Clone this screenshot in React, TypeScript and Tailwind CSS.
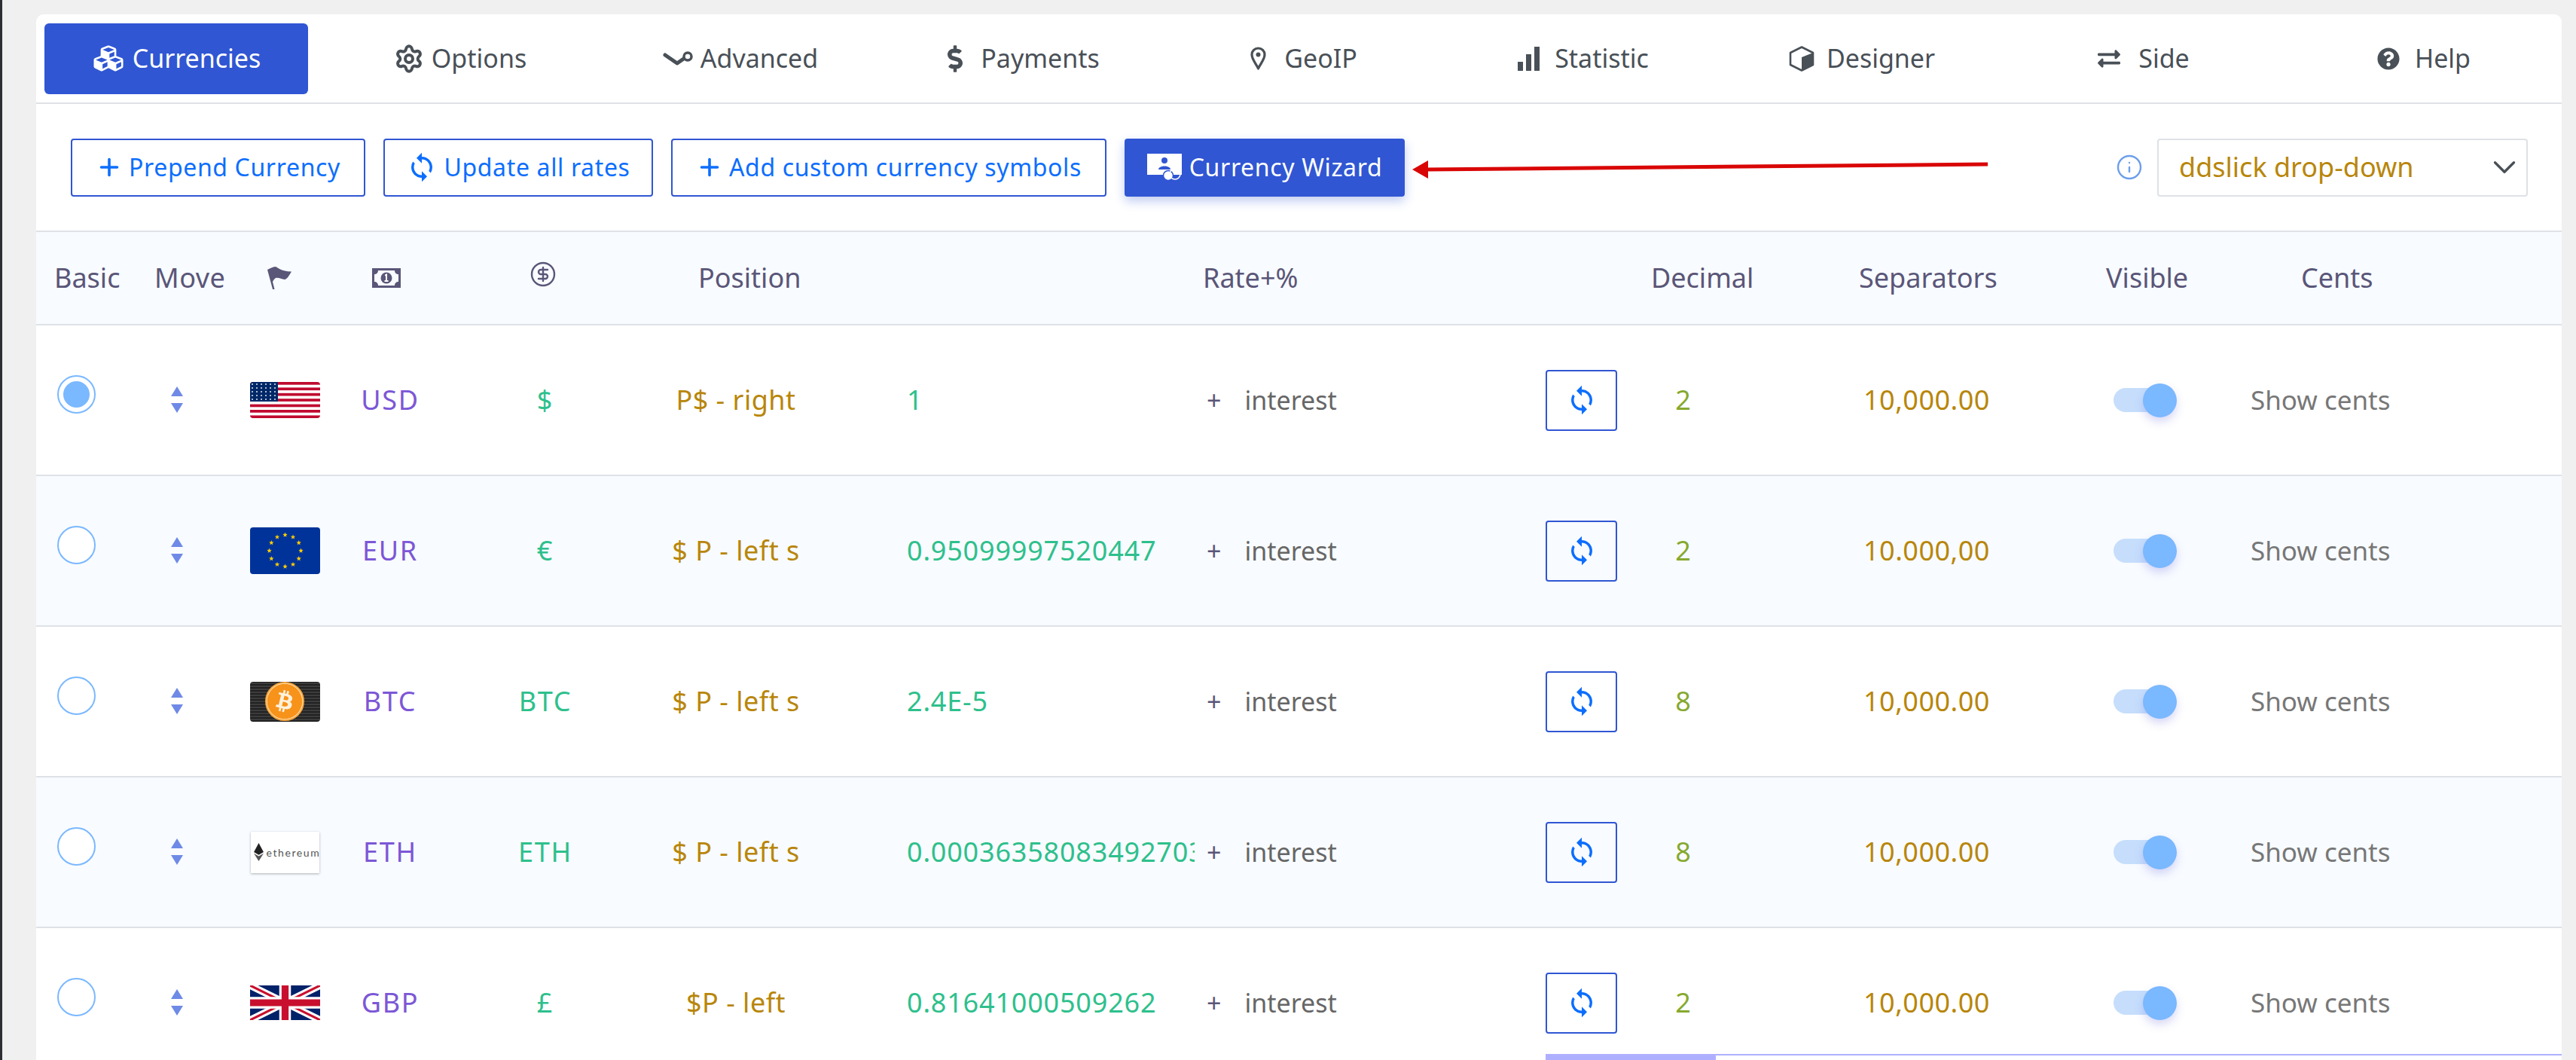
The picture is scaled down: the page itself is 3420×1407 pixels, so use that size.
import { ChevronDown, Plus, Settings, Info, CircleDollarSign } from "lucide-react";
import { FaBitcoin, FaCubes, FaDollarSign, FaExchangeAlt, FaQuestionCircle } from "react-icons/fa";
import { MdSync } from "react-icons/md";
import type { ReactNode } from "react";

const rows = [
  { code: "USD", sym: "$", pos: "P$ - right", rate: "1", dec: "2", sep: "10,000.00", flag: "us", checked: true },
  { code: "EUR", sym: "€", pos: "$ P - left s", rate: "0.95099997520447", dec: "2", sep: "10.000,00", flag: "eu", checked: false },
  { code: "BTC", sym: "BTC", pos: "$ P - left s", rate: "2.4E-5", dec: "8", sep: "10,000.00", flag: "btc", checked: false },
  { code: "ETH", sym: "ETH", pos: "$ P - left s", rate: "0.00036358083492703", dec: "8", sep: "10,000.00", flag: "eth", checked: false },
  { code: "GBP", sym: "£", pos: "$P - left", rate: "0.81641000509262", dec: "2", sep: "10,000.00", flag: "gb", checked: false },
];

function starPoints(cx: number, cy: number, r: number) {
  return Array.from({ length: 10 }, (_, i) => {
    const rad = i % 2 === 0 ? r : r * 0.42;
    const a = (i * 36 * Math.PI) / 180;
    return `${cx + rad * Math.sin(a)},${cy - rad * Math.cos(a)}`;
  }).join(" ");
}

function FlagImage({ kind }: { kind: string }) {
  if (kind === "us") {
    return (
      <svg viewBox="0 0 93 48" className="w-[93px] h-[48px] rounded-[4px]">
        <rect width="93" height="48" fill="#fff" />
        {[0, 7.4, 14.8, 22.2, 29.6, 37, 44.4].map((y) => (
          <rect key={y} y={y} width="93" height="3.7" fill="#bf0a30" />
        ))}
        <rect width="37" height="26" fill="#002868" />
        {[3, 8, 13, 18, 23].map((y) =>
          [3, 9, 15, 21, 27, 33].map((x) => <circle key={`${x}-${y}`} cx={x} cy={y} r="0.9" fill="#fff" />),
        )}
      </svg>
    );
  }
  if (kind === "eu") {
    const stars = Array.from({ length: 12 }, (_, i) => i * 30);
    return (
      <svg viewBox="0 0 93 62" className="w-[93px] h-[62px] rounded-[4px]">
        <rect width="93" height="62" fill="#039" />
        {stars.map((a) => (
          <polygon
            key={a}
            points={starPoints(46.5 + 21 * Math.sin((a * Math.PI) / 180), 31 - 21 * Math.cos((a * Math.PI) / 180), 3.4)}
            fill="#fc0"
          />
        ))}
      </svg>
    );
  }
  if (kind === "btc") {
    return (
      <div className="w-[93px] h-[53px] rounded-[4px] flex items-center justify-center bg-[repeating-linear-gradient(0deg,#222_0_2px,#3c3c3c_2px_4px)]">
        <div className="w-[52px] h-[52px] rounded-full bg-[#fff1dc] flex items-center justify-center border-2 border-[#f7a63c]">
          <FaBitcoin className="w-[48px] h-[48px] text-[#f7931a]" />
        </div>
      </div>
    );
  }
  if (kind === "eth") {
    return (
      <div className="w-[91px] h-[55px] bg-white shadow-[0_1px_3px_rgba(0,0,0,0.3)] flex items-center pl-[4px] gap-[4px]">
        <svg viewBox="0 0 14 26" className="w-[13px] h-[24px] shrink-0">
          <path d="M7 0L0 13l7 4 7-4z" fill="#222" />
          <path d="M0 15l7 11 7-11-7 4z" fill="#555" />
        </svg>
        <span className="text-[14px] tracking-[1.6px] text-[#555] font-['Lato',sans-serif]">ethereum</span>
      </div>
    );
  }
  return (
    <svg viewBox="0 0 60 30" preserveAspectRatio="none" className="w-[93px] h-[46px]">
      <rect width="60" height="30" fill="#012169" />
      <path d="M0 0L60 30M60 0L0 30" stroke="#fff" strokeWidth="6" />
      <path d="M0 0L60 30M60 0L0 30" stroke="#c8102e" strokeWidth="2" />
      <path d="M30 0V30M0 15H60" stroke="#fff" strokeWidth="10" />
      <path d="M30 0V30M0 15H60" stroke="#c8102e" strokeWidth="6" />
    </svg>
  );
}

function Tab({ icon, label, active, className = "" }: { icon: ReactNode; label: string; active?: boolean; className?: string }) {
  return (
    <div
      className={`flex items-center justify-center gap-[10px] w-[350px] h-[94px] rounded-[6px] text-[34px] ${className} ${
        active ? "bg-[#3056d3] text-white" : "text-[#495057]"
      }`}
    >
      {icon}
      <span>{label}</span>
    </div>
  );
}

function OutlineButton({ icon, label, className }: { icon: ReactNode; label: string; className: string }) {
  return (
    <div
      className={`flex items-center justify-center gap-[8px] h-[77px] rounded-[4px] border-2 border-[#3056d3] text-[#0d6efd] text-[32px] tracking-[0.64px] ${className}`}
    >
      {icon}
      <span>{label}</span>
    </div>
  );
}

export default function App() {
  return (
    <div className="h-[1407px] overflow-hidden bg-[#f0f0f0] border-l-[3px] border-[#2b2e33] pl-[45px] pt-[19px] pr-[19px] font-['Noto_Sans',sans-serif]">
      <div className="relative h-[1388px] bg-white rounded-t-[10px] overflow-hidden">
        {/* tabs */}
        <div className="flex items-center gap-[23px] h-[119px] pl-[11px] border-b-2 border-[#dee2e6]">
          <Tab active label="Currencies" icon={<FaCubes className="w-[44px] h-[39px]" />} />
          <Tab className="pl-[8px]" label="Options" icon={<Settings className="w-[40px] h-[40px]" strokeWidth={2.4} />} />
          <Tab
            className="pl-[6px]"
            label="Advanced"
            icon={
              <svg viewBox="0 0 40 20" className="w-[40px] h-[20px]">
                <path d="M3 5l16 11 10-7" fill="none" stroke="#495057" strokeWidth="5" strokeLinecap="round" strokeLinejoin="round" />
                <circle cx="33" cy="7" r="5" fill="#fff" stroke="#495057" strokeWidth="3.500" />
              </svg>
            }
          />
          <Tab className="pl-[12px]" label="Payments" icon={<FaDollarSign className="w-[20px] h-[36px] mr-[14px]" />} />
          <Tab
            className="pl-[10px]"
            label="GeoIP"
            icon={
              <svg viewBox="0 0 21 31" className="w-[21px] h-[31px] mr-[14px]">
                <path d="M10.500 29C8 23 2 17 2 10.500a8.500 8.500 0 0 1 17 0C19 17 13 23 10.500 29z" fill="none" stroke="#495057" strokeWidth="3.200" strokeLinejoin="round" />
                <circle cx="10.500" cy="10.500" r="3" fill="#495057" />
              </svg>
            }
          />
          <Tab
            className="pl-[6px]"
            label="Statistic"
            icon={
              <svg viewBox="0 0 29 32" className="w-[29px] h-[32px] mr-[10px]">
                <rect x="0" y="20" width="7" height="12" fill="#495057" />
                <rect x="11" y="10" width="7" height="22" fill="#495057" />
                <rect x="22" y="0" width="7" height="32" fill="#495057" />
              </svg>
            }
          />
          <Tab
            label="Designer"
            icon={
              <svg viewBox="0 0 34 34" className="w-[34px] h-[34px] mr-[6px]">
                <path d="M17 1.500L32 9v16L17 32.500 2 25V9z" fill="#fff" stroke="#495057" strokeWidth="2.600" strokeLinejoin="round" />
                <path d="M17 15L32 9v16L17 32.500z" fill="#495057" />
              </svg>
            }
          />
          <Tab label="Side" icon={<FaExchangeAlt className="w-[34px] h-[30px] mr-[12px]" />} />
          <Tab label="Help" icon={<FaQuestionCircle className="w-[30px] h-[30px] mr-[10px]" />} />
        </div>

        {/* toolbar */}
        <div className="flex items-center h-[168px] pl-[46px] pr-[45px] gap-[24px]">
          <OutlineButton className="w-[391px]" label="Prepend Currency" icon={<Plus className="w-[36px] h-[36px]" strokeWidth={2.4} />} />
          <OutlineButton className="w-[358px]" label="Update all rates" icon={<MdSync className="w-[42px] h-[42px]" />} />
          <OutlineButton className="w-[578px]" label="Add custom currency symbols" icon={<Plus className="w-[36px] h-[36px]" strokeWidth={2.4} />} />
          <div className="flex items-center justify-center gap-[10px] w-[372px] h-[77px] rounded-[4px] bg-[#3056d3] text-white text-[32px] tracking-[0.64px] shadow-[0_6px_14px_rgba(48,86,211,0.3)]">
            <svg viewBox="0 0 46 36" className="w-[46px] h-[36px]">
              <rect width="46" height="28" fill="#fff" />
              <circle cx="23" cy="9" r="4" fill="#3056d3" />
              <path d="M15 21c0-6 16-6 16 0z" fill="#3056d3" />
              <circle cx="28" cy="29" r="6.500" fill="#fff" stroke="#3056d3" strokeWidth="1.500" />
              <circle cx="37" cy="27" r="7" fill="none" stroke="#fff" strokeWidth="1.500" />
            </svg>
            <span>Currency Wizard</span>
          </div>
          <div className="ml-auto flex items-center gap-[19px]">
            <Info className="w-[36px] h-[36px] text-[#6d9eeb]" strokeWidth={1.6} />
            <div className="flex items-center justify-between w-[492px] h-[77px] border-2 border-[#dee2e6] rounded-[4px] pl-[27px] pr-[4px] text-[36px] text-[#b8860b]">
              <span>ddslick drop-down</span>
              <ChevronDown className="w-[50px] h-[50px] text-[#495057]" strokeWidth={1.6} />
            </div>
          </div>
        </div>

        {/* annotation arrow */}
        <svg className="absolute left-[1825px] top-[185px] w-[770px] h-[40px]" viewBox="0 0 770 40">
          <path d="M2 21L23 9v24z" fill="#d90606" />
          <path d="M20 21L766 14" stroke="#d90606" strokeWidth="5" />
        </svg>

        {/* table head */}
        <div className="grid grid-cols-[157px_126px_80px_204px_212px_770px_595px_276px_328px_259px_1fr] items-center h-[126px] bg-[#f8fbff] border-y-2 border-[#dee2e6] text-[36px] text-[#5a5678]">
          <div className="pl-[24px]">Basic</div>
          <div className="tracking-[0.5px]">Move</div>
          <div className="flex justify-center">
            <svg viewBox="0 0 32 30" className="w-[32px] h-[30px]">
              <path d="M0 4C4 2 8 0 11 0c4 2 7 6 21 6.500-3 4.500-5 9.500-9 10.500-4 0-8-3-12-2-2 1-3 3-4 5l2.500 10H7z" fill="#5a5678" />
            </svg>
          </div>
          <div className="flex justify-center">
            <svg viewBox="0 0 38 26" className="w-[38px] h-[26px]">
              <path fillRule="evenodd" d="M0 0h38v26H0zM8 3c0 3-2 5-5 5v10c3 0 5 2 5 5h22c0-3 2-5 5-5V8c-3 0-5-2-5-5z" fill="#5a5678" />
              <circle cx="19" cy="13" r="7.500" fill="#5a5678" />
              <path d="M17 8.500l3-1.500v9h1.500v2h-5v-2H18v-6l-1 .5z" fill="#fff" />
            </svg>
          </div>
          <div className="flex justify-center -mt-[10px]">
            <CircleDollarSign className="w-[36px] h-[36px]" strokeWidth={1.6} />
          </div>
          <div className="pl-[100px]">Position</div>
          <div>Rate+%</div>
          <div>Decimal</div>
          <div>Separators</div>
          <div>Visible</div>
          <div>Cents</div>
        </div>

        {/* rows */}
        {rows.map((r, i) => (
          <div
            key={r.code}
            className={`grid grid-cols-[106px_162px_124px_156px_256px_250px_484px_466px_95px_175px_472px_106px_1fr] items-center h-[200px] border-b-2 border-[#dee2e6] text-[36px] text-center ${
              i % 2 === 1 ? "bg-[#f8fbff]" : "bg-white"
            }`}
          >
            <div className="flex justify-center -mt-[16px]">
              <div className="w-[51px] h-[51px] rounded-full border-2 border-[#7ab8ff] bg-white flex items-center justify-center">
                {r.checked && <div className="w-[35px] h-[35px] rounded-full bg-[#7ab8ff]" />}
              </div>
            </div>
            <div className="flex flex-col items-center gap-[9px] -mt-[2px]">
              <div className="w-0 h-0 border-x-[8px] border-x-transparent border-b-[13px] border-b-[#6e8ae6]" />
              <div className="w-0 h-0 border-x-[8px] border-x-transparent border-t-[13px] border-t-[#6e8ae6]" />
            </div>
            <div className="flex justify-center"><FlagImage kind={r.flag} /></div>
            <div className="text-[#7c57d6] tracking-[1.7px]">{r.code}</div>
            <div className="text-[#2ec08c] tracking-[1.7px]">{r.sym}</div>
            <div className="text-[#b8860b] tracking-[0.5px]">{r.pos}</div>
            <div className="pl-[102px] text-left text-[#2ec08c] tracking-[0.8px] whitespace-nowrap overflow-hidden">{r.rate}</div>
            <div className="flex items-center pl-[16px] gap-[31px] text-[34px] text-[#666]">
              <span className="text-[#5a5678]">+</span>
              <span>interest</span>
            </div>
            <div className="w-[95px] h-[81px] rounded-[4px] border-2 border-[#3056d3] flex items-center justify-center">
              <MdSync className="w-[42px] h-[42px] text-[#0d6efd]" />
            </div>
            <div className="text-[#86a92f]">{r.dec}</div>
            <div className="text-[#b8860b] tracking-[0.5px]">{r.sep}</div>
            <div className="relative h-[45px]">
              <div className="absolute left-[12px] top-[6px] w-[74px] h-[32px] rounded-full bg-[#c6defc]" />
              <div className="absolute left-[51px] top-0 w-[45px] h-[45px] rounded-full bg-[#7ab8ff] shadow-[0_6px_12px_rgba(100,100,220,0.25)]" />
            </div>
            <div className="pl-[88px] text-left text-[35px] text-[#777] whitespace-nowrap">Show cents</div>
          </div>
        ))}

        {/* horizontal scrollbar */}
        <div className="absolute left-[2004px] right-0 top-[1380px] h-[8px] border-t-2 border-[#aeb0ff] bg-white">
          <div className="w-[226px] h-full bg-[#aeb0ff]" />
        </div>
      </div>
    </div>
  );
}
